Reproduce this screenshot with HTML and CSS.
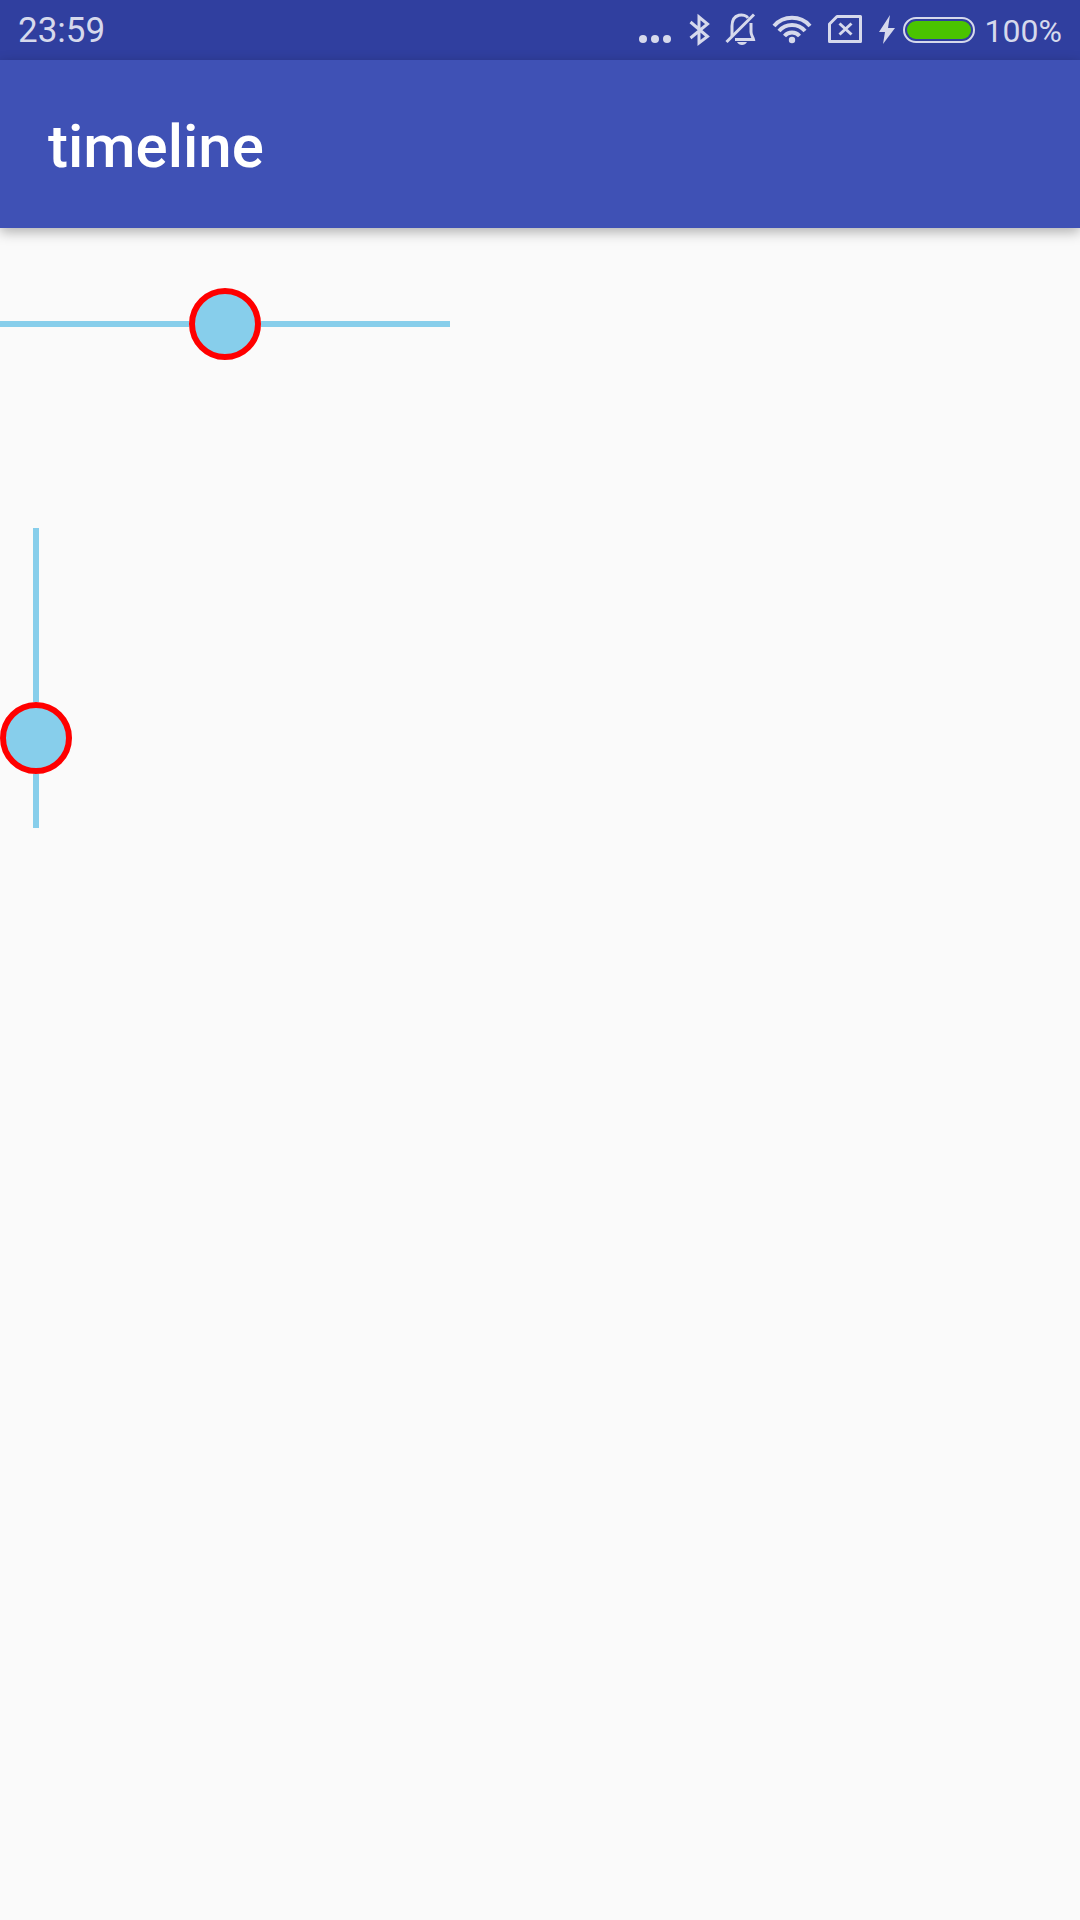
FILE: index.html
```html
<!DOCTYPE html>
<html lang="en">
<head>
<meta charset="utf-8">
<meta name="viewport" content="width=device-width, initial-scale=1">
<title>timeline</title>
<link rel="stylesheet" href="styles.css">
</head>
<body>
<div class="status-bar">
  <time class="clock">23:59</time>
  <div class="status-icons">
    <svg class="icon" width="32" height="36" viewBox="0 0 32 36" role="img" aria-label="More notifications">
      <g fill="currentColor"><circle cx="4" cy="27" r="4"/><circle cx="16" cy="27" r="4"/><circle cx="28" cy="27" r="4"/></g>
    </svg>
    <svg class="icon icon-bluetooth" width="22" height="36" viewBox="0 0 22 36" role="img" aria-label="Bluetooth">
      <path d="M1.500 10L18.500 24.500L10 31V5L18.500 12L1.500 26" fill="none" stroke="currentColor" stroke-width="3"/>
    </svg>
    <svg class="icon icon-bell" width="32" height="36" viewBox="0 0 32 36" role="img" aria-label="Silent">
      <g fill="none" stroke="currentColor" stroke-width="3">
        <path d="M7 24V14C7 1 20 1 23 6"/>
        <path d="M26 11V20C26 23 28 25 28.500 27.500H10"/>
        <path d="M1.500 30L29 2.500"/>
      </g>
      <path d="M12 30H22C20 34 14 34 12 30Z" fill="currentColor"/>
    </svg>
    <svg class="icon icon-wifi" width="40" height="36" viewBox="0 0 40 36" role="img" aria-label="Wi-Fi">
      <g fill="none" stroke="currentColor" stroke-width="4">
        <path d="M2 14A24 24 0 0 1 38 14"/>
        <path d="M7 19A17 17 0 0 1 33 19"/>
        <path d="M12.500 24A10 10 0 0 1 27.500 24"/>
      </g>
      <circle cx="20" cy="28" r="3.200" fill="currentColor"/>
    </svg>
    <svg class="icon icon-sim" width="34" height="36" viewBox="0 0 34 36" role="img" aria-label="No SIM card">
      <path d="M9 4.500H32.500V29.500H1.500V12Z" fill="none" stroke="currentColor" stroke-width="3" stroke-linejoin="round"/>
      <path d="M11.500 11.500L23.500 22.500M23.500 11.500L11.500 22.500" stroke="currentColor" stroke-width="3"/>
    </svg>
    <svg class="icon icon-bolt" width="18" height="36" viewBox="0 0 18 36" role="img" aria-label="Charging">
      <path d="M12 3L1 20H7L5 32L17 16H10Z" fill="currentColor"/>
    </svg>
    <svg class="icon icon-battery" width="72" height="36" viewBox="0 0 72 36" role="img" aria-label="Battery full">
      <rect x="1" y="6" width="70" height="24" rx="12" fill="none" stroke="currentColor" stroke-width="2"/>
      <rect x="4" y="9" width="64" height="18" rx="9" fill="#4ac400"/>
    </svg>
    <span class="charge">100%</span>
  </div>
</div>
<header class="app-bar">
  <h1 class="title">timeline</h1>
</header>
<main class="content">
  <div class="timeline timeline-horizontal">
    <span class="line"></span>
    <span class="marker"></span>
    <span class="line"></span>
  </div>
  <div class="timeline timeline-vertical">
    <span class="line line-before"></span>
    <span class="marker"></span>
    <span class="line line-after"></span>
  </div>
</main>
</body>
</html>
```

FILE: styles.css
```css
* {
  box-sizing: border-box;
}

body {
  margin: 0;
  min-height: 100vh;
  background: #fafafa;
  font-family: Roboto, "Liberation Sans", sans-serif;
}

.status-bar {
  display: flex;
  align-items: center;
  justify-content: space-between;
  height: 60px;
  padding: 0 18px;
  background: #303f9f;
  color: #d6d9ec;
}

.clock {
  font-size: 35px;
  line-height: 40px;
  padding-top: 2px;
}

.status-icons {
  display: flex;
  align-items: center;
}

.icon {
  display: block;
  flex: none;
}

.icon-bluetooth {
  margin-left: 18px;
}

.icon-bell {
  margin-left: 14px;
}

.icon-wifi {
  margin-left: 15px;
}

.icon-sim {
  margin-left: 16px;
}

.icon-bolt {
  margin-left: 16px;
}

.icon-battery {
  margin-left: 7px;
}

.charge {
  margin-left: 10px;
  padding-top: 2px;
  font-size: 32px;
  line-height: 40px;
}

.app-bar {
  display: flex;
  align-items: center;
  height: 168px;
  padding: 0 48px;
  background: #3f51b5;
  box-shadow: 0 4px 12px rgba(0, 0, 0, 0.3);
  color: #fff;
}

.title {
  margin: 0;
  padding-top: 6px;
  font-size: 60px;
  font-weight: 500;
  line-height: 72px;
}

.content {
  display: flex;
  flex-direction: column;
  align-items: flex-start;
  gap: 168px;
  padding-top: 60px;
}

.timeline {
  display: flex;
  align-items: center;
}

.timeline-horizontal {
  width: 450px;
}

.timeline-vertical {
  flex-direction: column;
  height: 300px;
}

.line {
  background: #87ceeb;
}

.timeline-horizontal .line {
  flex: 1;
  height: 6px;
}

.timeline-vertical .line {
  width: 6px;
}

.line-before {
  flex: 1;
}

.line-after {
  height: 54px;
}

.marker {
  flex: none;
  width: 72px;
  height: 72px;
  border: 6px solid #f00;
  border-radius: 50%;
  background: #87ceeb;
}
```
